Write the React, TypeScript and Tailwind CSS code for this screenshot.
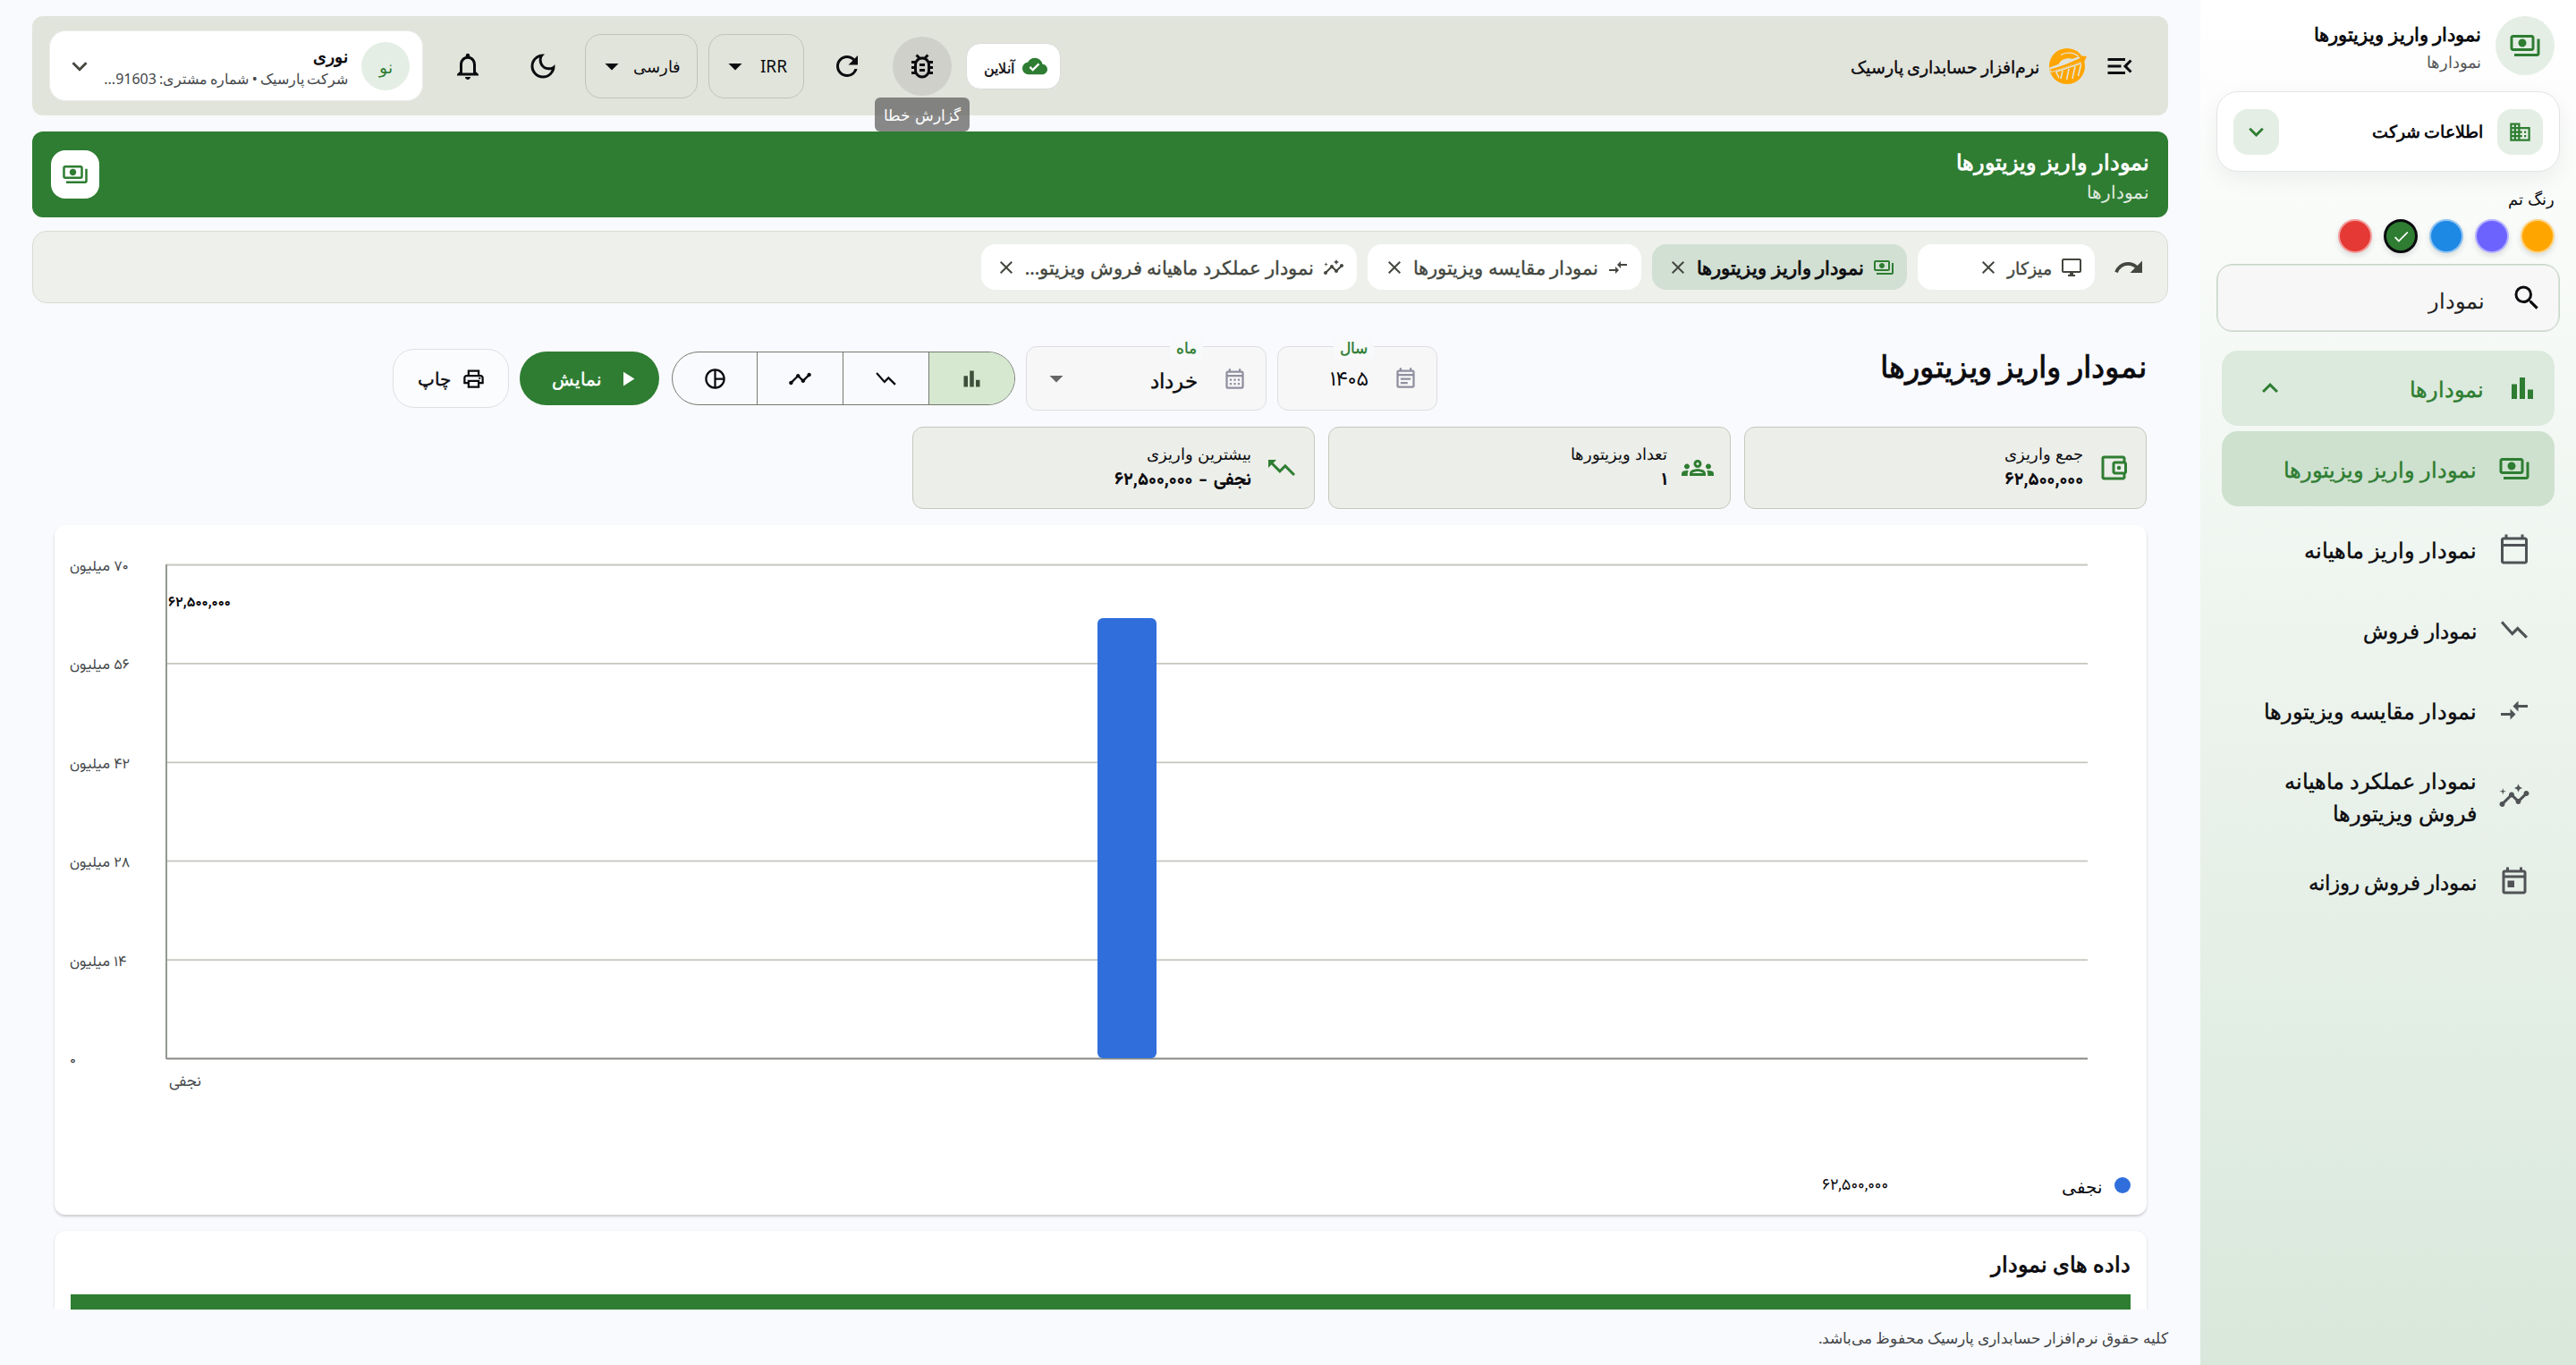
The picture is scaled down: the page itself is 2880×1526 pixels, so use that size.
import type { ReactNode } from 'react';
import {
  MdArrowDropDown, MdBarChart, MdBusiness, MdCheck, MdClose, MdCloudDone, MdCompareArrows, MdExpandLess,
  MdExpandMore, MdInsights, MdMenuOpen, MdNotificationsNone, MdOutlineAccountBalanceWallet,
  MdOutlineBugReport, MdOutlineCalendarMonth, MdOutlineCalendarToday, MdOutlineDarkMode,
  MdOutlineDesktopWindows, MdOutlineEventNote, MdOutlineGroups, MdOutlinePayments, MdOutlinePrint,
  MdOutlineToday, MdPlayArrow, MdRedo, MdRefresh, MdSearch, MdShowChart, MdTimeline, MdTrendingUp,
} from 'react-icons/md';
import type { IconType } from 'react-icons';

const medium = '[-webkit-text-stroke:0.4px_currentColor]';
const strong = '[-webkit-text-stroke:0.8px_currentColor]';
const digits = "font-[Vazirmatn,'Noto_Sans',sans-serif]";

const swatches = ['bg-[#ffa500]', 'bg-[#6c63ff]', 'bg-[#1e88e5]', 'bg-[#2e7d32]', 'bg-[#e53935]'];

const menu: { icon: IconType; label: string; active?: boolean; flip?: boolean; tall?: boolean; size?: string }[] = [
  { icon: MdOutlinePayments, label: 'نمودار واریز ویزیتورها', active: true },
  { icon: MdOutlineCalendarToday, label: 'نمودار واریز ماهیانه' },
  { icon: MdShowChart, label: 'نمودار فروش', flip: true, size: 'text-[23.200px]' },
  { icon: MdCompareArrows, label: 'نمودار مقایسه ویزیتورها' },
  { icon: MdInsights, label: 'نمودار عملکرد ماهیانه فروش ویزیتورها', tall: true },
  { icon: MdOutlineToday, label: 'نمودار فروش روزانه', size: 'text-[22.700px] [word-spacing:-1px]' },
];

function Sidebar() {
  return (
    <aside className="flex h-full w-[420px] shrink-0 flex-col bg-linear-to-b from-white to-[#d9e8db] px-[18px] pt-[18px]">
      <div className="flex h-[66px] items-center gap-4 px-1.5">
        <div className="flex size-[66px] items-center justify-center rounded-full bg-[#e4eee5] text-[#2e7d32]">
          <MdOutlinePayments size={36} />
        </div>
        <div className="flex flex-col pt-0.5">
          <span className="text-[21px] leading-[34px] font-bold">نمودار واریز ویزیتورها</span>
          <span className="text-[18px] leading-[28px] text-[#55565a]">نمودارها</span>
        </div>
      </div>

      <div className="mt-[18px] flex h-[90px] items-center rounded-3xl border border-[#e4e4e6] bg-white px-[18px] shadow-[0_8px_24px_rgba(0,0,0,0.06)]">
        <div className="flex size-[51px] items-center justify-center rounded-2xl bg-[#e4eee5] text-[#2e7d32]">
          <MdBusiness size={27} />
        </div>
        <span className="ms-4 flex-1 text-[18.500px] font-bold [word-spacing:-1px]">اطلاعات شرکت</span>
        <div className="flex size-[51px] items-center justify-center rounded-2xl bg-[#e4eee5] text-[#2e7d32]">
          <MdExpandMore size={33} />
        </div>
      </div>

      <div className="mt-[15px] px-1.5 text-[18px] leading-[30px]">رنگ تم</div>
      <div className="mt-[8px] flex gap-[13px] px-1.5">
        {swatches.map((c, i) => (
          <div
            key={c}
            className={`flex size-[38px] items-center justify-center rounded-full shadow-[0_3px_6px_rgba(0,0,0,0.12)] ${c} ${i === 3 ? 'border-[3px] border-[#0b0b0f] text-white' : 'border-2 border-white/50'}`}
          >
            {i === 3 && <MdCheck size={21} />}
          </div>
        ))}
      </div>

      <div className="mt-[12px] flex h-[76px] shrink-0 items-center rounded-[18px] border border-[#c3dac5] bg-[#e0e0e0]">
        <div className="flex h-full w-full items-center rounded-[16px] border border-[#dfdfe0] bg-[#f7f7f7] ps-[17px] pe-5">
          <MdSearch size={36} className="text-[#0b0b0f]" />
          <span className="ms-[29px] pt-1.5 text-[24px] text-[#222]">نمودار</span>
        </div>
      </div>

      <nav className="mt-[21px] flex flex-col gap-1.5 px-1.5">
        <div className="flex h-[84px] items-center rounded-[18px] bg-[#dceadd] ps-[18px] pe-[36px] text-[#2e7d32]">
          <MdBarChart size={36} />
          <span className={`ms-[25px] flex-1 pt-0.5 text-[24px] ${medium}`}>نمودارها</span>
          <MdExpandLess size={36} />
        </div>
        {menu.map(({ icon: Icon, label, active, flip, tall, size }) => (
          <div
            key={label}
            className={`flex items-center rounded-[18px] ps-[27px] pe-[18px] ${tall ? 'h-[96px]' : 'h-[84px]'} ${active ? 'bg-[#cee1cf] text-[#2e7d32]' : 'text-[#0b0b0f]'}`}
          >
            <Icon size={36} className={`shrink-0 ${active ? '' : 'text-[#505356]'} ${flip ? '-scale-x-100' : ''}`} />
            <span className={`ms-[24px] w-[250px] pt-px leading-[36px] ${medium} ${size ?? 'text-[24px]'} ${tall ? 'max-w-[236px]' : 'whitespace-nowrap'}`}>{label}</span>
          </div>
        ))}
      </nav>
    </aside>
  );
}

function Logo() {
  return (
    <svg viewBox="0 0 42 42" className="h-[42px] w-[42px]">
      <circle cx="20" cy="21" r="20" fill="#ffa500" />
      <path d="M10 22 C11 13 20 10 29 14 L25 16.500 C20 17.500 14 19.500 10 22 Z" fill="#e1e4db" />
      <path d="M13 8.500 C19 4.500 28 5.500 34 11" stroke="#e1e4db" strokeWidth="1.200" fill="none" />
      <path d="M1 25.500 L42 10" stroke="#e1e4db" strokeWidth="6" />
      <path d="M42 10 L32 9 L34.500 12 C25 16.500 14 21 1 24.500 L3 27 C15 23 27 19 36 15.500 L38 18.500 Z" fill="#ffa500" />
      <path d="M7 27.500 L36 17.500" stroke="#e1e4db" strokeWidth="1.500" />
      <path d="M8 28 l3 6 M15 26 l-2 9 M22 24 l-2.500 12 M29 21 l-3 14 M35.500 19 l-3 13" stroke="#e1e4db" strokeWidth="1.600" />
    </svg>
  );
}

function SelectBox({ label, className }: { label: string; className: string }) {
  return (
    <div className={`flex h-[72px] items-center justify-between rounded-[18px] border border-[#c0c3ba] ps-[18px] pe-[11px] ${className}`}>
      <span className="pt-0.5">{label}</span>
      <MdArrowDropDown size={36} />
    </div>
  );
}

function Header() {
  return (
    <header className="flex h-[111px] shrink-0 items-center rounded-xl bg-[#e1e4db] ps-[36px] pe-[19px] text-[#0b0b0f]">
      <MdMenuOpen size={36} />
      <div className="ms-[19px]"><Logo /></div>
      <span className={`ms-[11px] pt-1 text-[19.300px] [word-spacing:-1px] ${medium}`}>نرم‌افزار حسابداری پارسیک</span>
      <div className="flex-1" />
      <div className="flex h-[52px] w-[106px] items-center rounded-2xl border border-[#dcdcdc] bg-white ps-[14px] text-[16px]">
        <MdCloudDone size={28} className="shrink-0 text-[#2e7d32]" />
        <span className={`ms-[9px] pt-1 ${medium}`}>آنلاین</span>
      </div>
      <div className="relative ms-[16px] flex size-[66px] items-center justify-center rounded-full bg-[#ced0c9]">
        <MdOutlineBugReport size={36} />
        <span className="absolute top-[68px] left-1/2 flex h-[38px] w-[106px] -translate-x-1/2 items-center justify-center rounded-md bg-[#616161]/75 pt-1 text-[16.500px] whitespace-nowrap text-white">گزارش خطا</span>
      </div>
      <MdRefresh size={36} className="ms-[33px]" />
      <SelectBox label="IRR" className="ms-[30px] w-[107px] text-[19px]" />
      <SelectBox label="فارسی" className="ms-[12px] w-[126px] text-[18px]" />
      <MdOutlineDarkMode size={36} className="ms-[29px]" />
      <MdNotificationsNone size={36} className="ms-[48px]" />
      <div className="ms-[32px] flex h-[79px] w-[418px] items-center rounded-[18px] border border-[#ececec] bg-white ps-[14px] pe-[16px]">
        <div className="flex size-[54px] shrink-0 items-center justify-center rounded-full bg-[#e4eee5] pt-1 text-[19px] text-[#2e7d32]">نو</div>
        <div className="ms-[15px] flex flex-1 flex-col pt-0.5">
          <span className="text-[18.500px] leading-[26px] font-bold">نوری</span>
          <span className="text-[16px] leading-[24px] whitespace-nowrap text-[#44474a] [word-spacing:-1px]">شرکت پارسیک • شماره مشتری: 91603...</span>
        </div>
        <MdExpandMore size={34} className="shrink-0 text-[#44483f]" />
      </div>
    </header>
  );
}

const tabs: { icon: IconType; label: string; width: string; size?: string; active?: boolean }[] = [
  { icon: MdOutlineDesktopWindows, label: 'میزکار', width: 'w-[198px]', size: 'text-[18.500px]' },
  { icon: MdOutlinePayments, label: 'نمودار واریز ویزیتورها', width: 'w-[285px]', active: true },
  { icon: MdCompareArrows, label: 'نمودار مقایسه ویزیتورها', width: 'w-[306px]' },
  { icon: MdInsights, label: 'نمودار عملکرد ماهیانه فروش ویزیتو...', width: 'w-[420px]' },
];

function Tabs() {
  return (
    <div className="mt-[15px] flex h-[81px] shrink-0 items-center rounded-2xl border border-[#d9dcd2] bg-[#eef0ec] ps-[25px] text-[#43473f]">
      <MdRedo size={36} />
      <div className="ms-[20px] flex gap-3">
        {tabs.map(({ icon: Icon, label, width, size, active }) => (
          <div key={label} className={`flex h-[51px] items-center rounded-2xl ps-[14px] ${width} ${active ? 'bg-[#d2e0d3]' : 'bg-white'}`}>
            <Icon size={24} className={`shrink-0 ${active ? 'text-[#2e7d32]' : ''}`} />
            <span className={`ms-[10px] pt-[3px] whitespace-nowrap ${size ?? 'text-[20.800px]'} ${active ? `text-[#0b0b0f] ${strong}` : medium}`}>{label}</span>
            <MdClose size={24} className="ms-[9px] shrink-0" />
          </div>
        ))}
      </div>
    </div>
  );
}

function Field({ label, value, icon: Icon, width, arrow }: { label: string; value: string; icon: IconType; width: string; arrow?: boolean }) {
  return (
    <div className={`relative flex h-[72px] items-center rounded-xl border border-[#dedee0] bg-[#f7f7f7] ps-[21px] pe-[15px] ${width}`}>
      <span className={`absolute top-[-11px] right-[70px] bg-[#f8f9fb] px-[7px] text-[17px] leading-[24px] text-[#2e7d32] ${medium}`}>{label}</span>
      <Icon size={27} className="shrink-0 text-[#8f8fa0]" />
      <span className={`ms-[28px] flex-1 ${arrow ? `pt-1 text-[23px] ${medium}` : `pt-1 text-[23px] ${digits}`}`}>{value}</span>
      {arrow && <MdArrowDropDown size={36} className="text-[#666]" />}
    </div>
  );
}

function PieIcon() {
  return (
    <svg viewBox="0 0 24 24" className="size-[27px]" fill="none" stroke="currentColor" strokeWidth="2">
      <circle cx="12" cy="12" r="9" />
      <path d="M12 3v18M12 12h9" />
    </svg>
  );
}

function Toolbar() {
  const cell = 'flex w-24 items-center justify-center border-e border-[#747a72]';
  return (
    <div className="flex h-[72px] items-center gap-3">
      <h1 className={`flex-1 pb-[28px] text-[33.500px] text-[#0b0b0f] ${strong}`}>نمودار واریز ویزیتورها</h1>
      <div className="flex items-center gap-3">
        <Field label="سال" value="۱۴۰۵" icon={MdOutlineEventNote} width="w-[179px]" />
        <Field label="ماه" value="خرداد" icon={MdOutlineCalendarMonth} width="w-[269px]" arrow />
      </div>
      <div className="flex h-[60px] w-[384px] overflow-hidden rounded-full border border-[#747a72]">
        <div className={`${cell} bg-[#d6e8cf] text-[#3d4f3a]`}><MdBarChart size={27} /></div>
        <div className={cell}><MdShowChart size={27} className="-scale-x-100" /></div>
        <div className={cell}><MdTimeline size={27} /></div>
        <div className="flex flex-1 items-center justify-center"><PieIcon /></div>
      </div>
      <div className="ms-[2px] flex h-[60px] w-[156px] items-center rounded-full bg-[#2e7d32] ps-[22px] text-white">
        <MdPlayArrow size={27} />
        <span className={`ms-[15px] pt-0.5 text-[19.500px] ${medium}`}>نمایش</span>
      </div>
      <div className="flex h-[66px] w-[130px] items-center rounded-3xl border border-[#e0e0e3] bg-[#fbfcfe] ps-[25px]">
        <MdOutlinePrint size={27} />
        <span className={`ms-[12px] pt-0.5 text-[20px] ${medium}`}>چاپ</span>
      </div>
      <div className="w-[366px]" />
    </div>
  );
}

function Stat({ icon, label, value }: { icon: ReactNode; label: string; value: string }) {
  return (
    <div className="flex h-[92px] w-[450px] items-center rounded-xl border border-[#c5c8bd] bg-[#eceee9] ps-[18px]">
      <div className="text-[#2e7d32]">{icon}</div>
      <div className="ms-[16px] flex flex-col pt-0.5">
        <span className="text-[17.500px] leading-[28px]">{label}</span>
        <span className={`text-[19.800px] leading-[34px] font-extrabold [word-spacing:2px] ${digits}`}>{value}</span>
      </div>
    </div>
  );
}

const ticks = ['۷۰ میلیون', '۵۶ میلیون', '۴۲ میلیون', '۲۸ میلیون', '۱۴ میلیون', '۰'];

function Chart() {
  return (
    <section className="mt-[18px] flex h-[771px] shrink-0 flex-col rounded-xl bg-white shadow-[0_2px_3px_rgba(0,0,0,0.18)]">
      <svg viewBox="0 0 2339 700" className={`h-[700px] w-full ${digits}`} direction="rtl">
        {ticks.map((t, i) => (
          <g key={t}>
            <line x1="125" x2="2273" y1={44.500 + i * 110.4} y2={44.500 + i * 110.4} stroke={i === 5 ? '#858a83' : '#c3c8bf'} strokeWidth="1.800" />
            <text x="17" y={51 + i * 110.4} textAnchor="end" fontSize="16.300" fill="#44474a">{t}</text>
          </g>
        ))}
        <line x1="125" x2="125" y1="44" y2="597" stroke="#929a91" strokeWidth="2" />
        <rect x="1166" y="104" width="66" height="492" rx="6" fill="#306fdb" />
        <text x="127" y="91" textAnchor="end" fontSize="16" fontWeight="700" fill="#0b0b0f">۶۲,۵۰۰,۰۰۰</text>
        <text x="128" y="627" textAnchor="end" fontSize="17" fill="#44474a">نجفی</text>
      </svg>
      <div className="mt-[18px] flex h-[40px] items-center ps-[18px]">
        <span className="size-[18px] rounded-full bg-[#306fdb]" />
        <span className="ms-[13px] w-[240px] pt-1 text-[20px]">نجفی</span>
        <span className={`pt-[3px] text-[18px] ${digits}`}>۶۲,۵۰۰,۰۰۰</span>
      </div>
    </section>
  );
}

export default function App() {
  return (
    <div dir="rtl" className="flex h-[1526px] w-[2880px] overflow-hidden bg-[#f9fafd] font-['Noto_Sans',sans-serif] text-[#0b0b0f]">
      <Sidebar />
      <main className="flex min-w-0 flex-1 flex-col px-9 pt-[18px]">
        <Header />
        <div className="mt-[18px] flex h-[96px] shrink-0 items-center justify-between rounded-xl bg-[#2e7d32] px-[21px] text-white">
          <div className="flex flex-col pt-0.5">
            <span className="text-[24px] leading-[38px] font-bold">نمودار واریز ویزیتورها</span>
            <span className="text-[19.500px] leading-[30px] text-white/85">نمودارها</span>
          </div>
          <div className="flex size-[54px] items-center justify-center rounded-2xl bg-white text-[#2e7d32]">
            <MdOutlinePayments size={30} />
          </div>
        </div>
        <Tabs />
        <div className="flex h-[1125px] flex-col overflow-hidden ps-[24px] pe-[25px] pt-[48px]">
          <Toolbar />
          <div className="mt-[18px] flex gap-[15px]">
            <Stat icon={<MdOutlineAccountBalanceWallet size={36} />} label="جمع واریزی" value="۶۲,۵۰۰,۰۰۰" />
            <Stat icon={<MdOutlineGroups size={36} />} label="تعداد ویزیتورها" value="۱" />
            <Stat icon={<MdTrendingUp size={36} className="-scale-x-100" />} label="بیشترین واریزی" value="نجفی - ۶۲,۵۰۰,۰۰۰" />
          </div>
          <Chart />
          <section className="mt-[18px] flex h-[200px] shrink-0 flex-col rounded-xl bg-white px-[18px] shadow-[0_1px_3px_rgba(0,0,0,0.15)]">
            <h2 className={`h-[71px] pt-[17px] text-[24px] leading-[40px] ${strong}`}>داده های نمودار</h2>
            <div className="h-[80px] bg-[#2e7d32]" />
          </section>
        </div>
        <footer className="pt-[16px] text-[17px] leading-[32px] text-[#44474a] [word-spacing:-0.500px]">کلیه حقوق نرم‌افزار حسابداری پارسیک محفوظ می‌باشد.</footer>
      </main>
    </div>
  );
}
